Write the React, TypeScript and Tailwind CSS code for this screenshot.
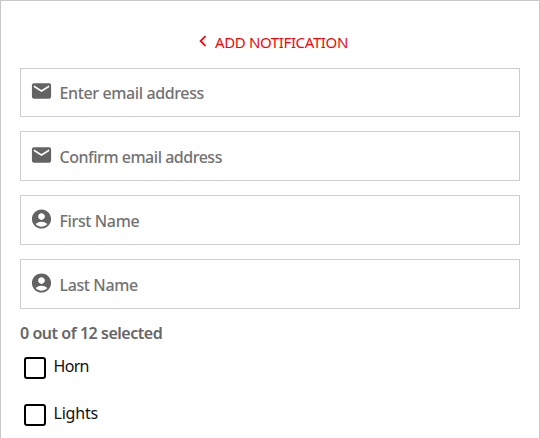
import React from 'react';
import { MdAccountCircle, MdChevronLeft, MdEmail } from 'react-icons/md';

const fields = [
  { id: 'email', placeholder: 'Enter email address', Icon: MdEmail, height: 'h-[49px]', tracking: 'tracking-[-0.38px]' },
  { id: 'confirmEmail', placeholder: 'Confirm email address', Icon: MdEmail, height: 'h-[50px]', tracking: 'tracking-[-0.48px]' },
  { id: 'firstName', placeholder: 'First Name', Icon: MdAccountCircle, height: 'h-[50px]', tracking: 'tracking-[-0.38px]' },
  { id: 'lastName', placeholder: 'Last Name', Icon: MdAccountCircle, height: 'h-[50px]', tracking: 'tracking-[-0.38px]' },
];

const alerts = [
  { id: 'horn', label: 'Horn', tracking: 'tracking-[-0.7px]' },
  { id: 'lights', label: 'Lights', tracking: 'tracking-[-0.2px]' },
];

export default function App() {
  return (
    <div className="h-[438px] overflow-hidden border border-b-0 border-[#c8c8c8] bg-white px-[19px] pt-[29px] font-['Noto_Sans',sans-serif]">
      <button className="flex h-6 w-full items-center justify-center text-[15px] text-[#ee0a0a]">
        <MdChevronLeft className="h-[22px] w-[22px] -translate-y-px" />
        <span className="ml-px tracking-[-0.38px] whitespace-nowrap">ADD NOTIFICATION</span>
      </button>

      <div className="mt-3.5 flex flex-col gap-3.5">
        {fields.map(({ id, placeholder, Icon, height, tracking }) => (
          <label key={id} className={`flex items-center border border-[#cccccc] pl-[9px] ${height}`}>
            <Icon className="h-[23px] w-[23px] shrink-0 translate-y-[-1.5px] text-[#636363]" />
            <input
              id={id}
              placeholder={placeholder}
              className={`ml-[6.5px] min-w-0 flex-1 pt-px text-[16px] font-medium outline-none placeholder:text-[#727272] ${tracking}`}
            />
          </label>
        ))}
      </div>

      <p className="mt-3 h-6 text-[16px] leading-6 font-semibold text-[#666666]">
        <span className="tracking-[-0.46px]">0 out of 12 selected</span>
      </p>

      {/* Alert types */}
      <div className="mt-3 flex flex-col gap-[25px] pl-1">
        {alerts.map((alert) => (
          <label key={alert.id} className="flex h-[22px] items-start">
            <input
              type="checkbox"
              className="h-[22px] w-[22px] shrink-0 appearance-none rounded-[3px] border-2 border-black bg-white"
            />
            <span className={`ml-[7.5px] text-[16px] leading-[19px] text-[#111111] ${alert.tracking}`}>{alert.label}</span>
          </label>
        ))}
      </div>
    </div>
  );
}
